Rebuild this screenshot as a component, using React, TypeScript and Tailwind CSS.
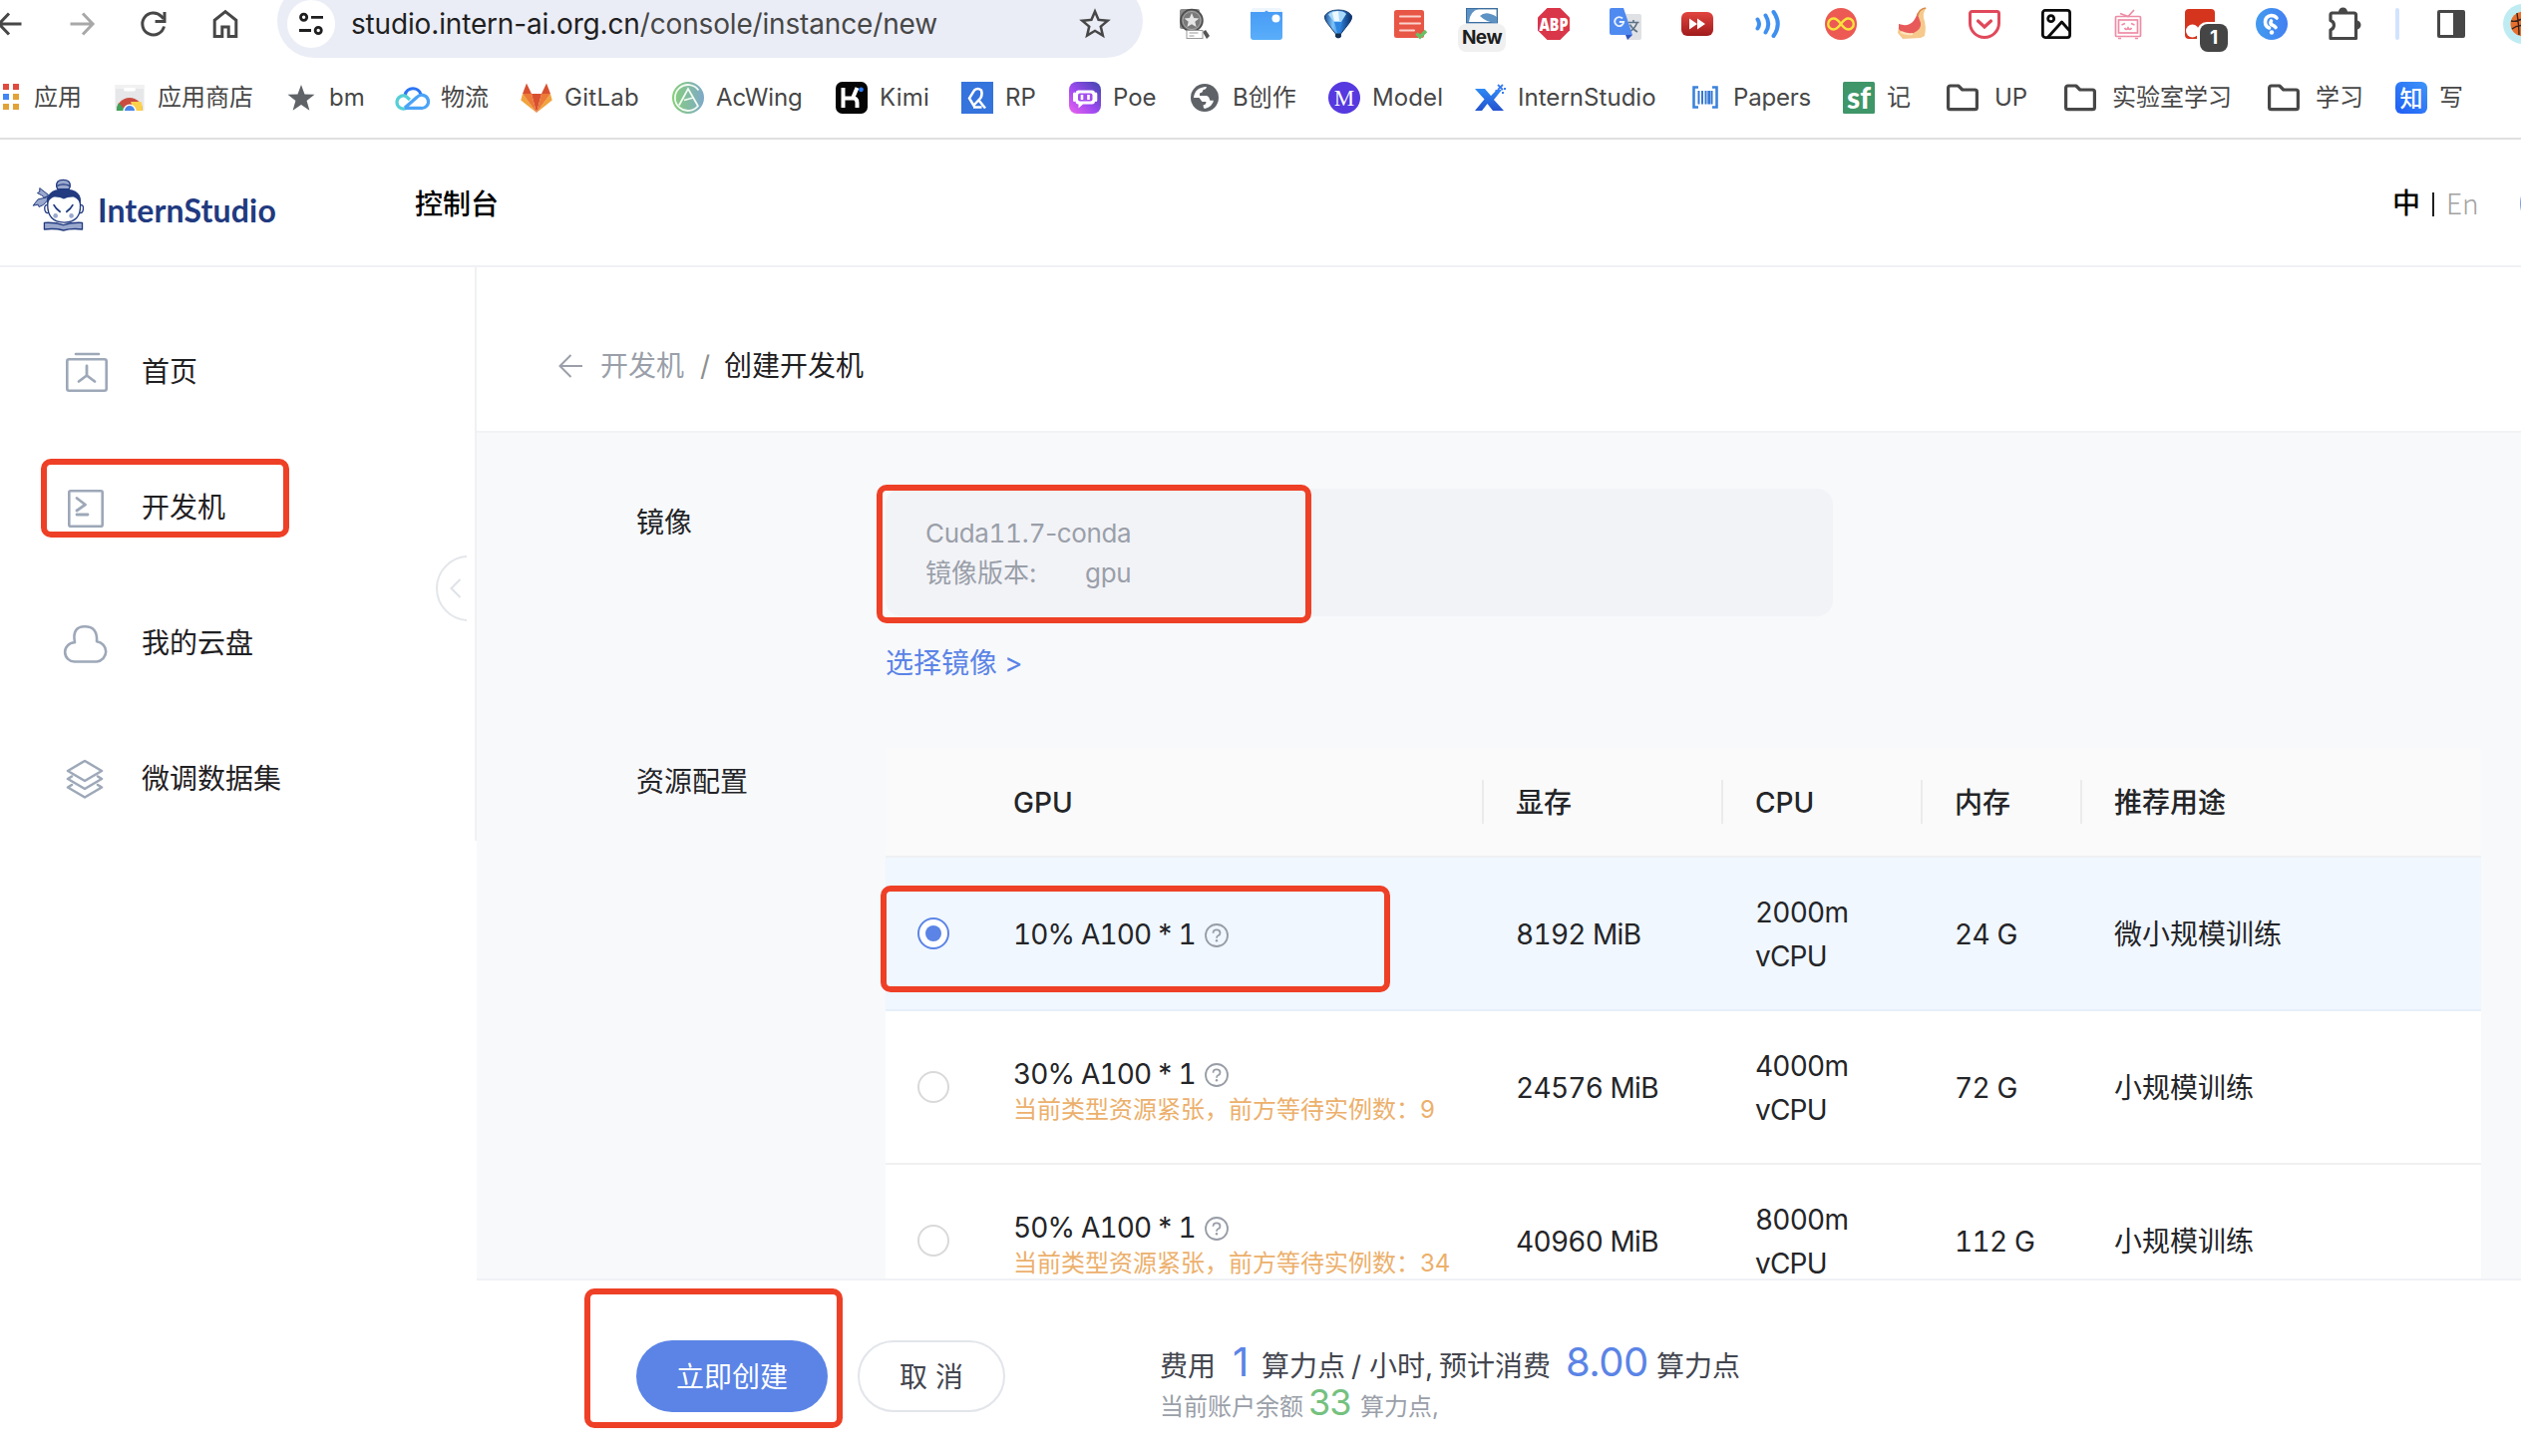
import React from 'react';

type IconProps = { children: React.ReactNode; className?: string; viewBox?: string };

function Svg({ children, className = 'size-8', viewBox = '0 0 32 32' }: IconProps) {
  return (
    <svg viewBox={viewBox} className={`shrink-0 overflow-visible ${className}`} fill="none">
      {children}
    </svg>
  );
}

/* ---------- browser toolbar ---------- */

function Cell({ children }: { children: React.ReactNode }) {
  return <div className="relative flex h-12 w-[72px] shrink-0 items-center justify-center">{children}</div>;
}

const arrow = (
  <path d="M4.500 16H27M17 5.500 27 16 17 26.500" strokeWidth="3" />
);

function NavButtons() {
  return (
    <div className="-ml-[26px] mr-4 flex">
      <Cell>
        <Svg className="size-8 rotate-180"><g stroke="#474747">{arrow}</g></Svg>
      </Cell>
      <Cell>
        <Svg><g stroke="#a8a8a8">{arrow}</g></Svg>
      </Cell>
      <Cell>
        <Svg>
          <path d="M26.500 18.500A11 11 0 1 1 23.800 8.400L26 10.800" stroke="#474747" strokeWidth="3" />
          <path d="M27 4v9.600h-9.400" stroke="#474747" strokeWidth="3" />
        </Svg>
      </Cell>
      <Cell>
        <Svg>
          <path d="M5.200 28.500V12.300L16 3.600l10.800 8.700v16.200h-7.600v-9.500h-6.400v9.500z" stroke="#474747" strokeWidth="3" />
        </Svg>
      </Cell>
    </div>
  );
}

function Omnibox() {
  return (
    <div className="relative -mt-4 flex h-[74px] w-[868px] shrink-0 rounded-[37px] bg-[#ebedf6] pt-4">
      <div className="ml-[10px] flex size-12 items-center justify-center rounded-full bg-white">
        <Svg className="size-6" viewBox="0 0 24 24">
          <g stroke="#1f1f1f" strokeWidth="2.800">
            <circle cx="4.600" cy="5.300" r="3.100" />
            <path d="M12 5.300h12M0 18.500h12" />
            <circle cx="19.200" cy="18.500" r="3.100" />
          </g>
        </Svg>
      </div>
      <div className="ml-4 h-12 whitespace-nowrap text-[28px] leading-[48px] tracking-[-0.16px] text-[#1f1f1f]">
        studio.intern-ai.org.cn<span className="text-[#474747]">/console/instance/new</span>
      </div>
      <div className="ml-auto mr-[29px] flex h-12 items-center">
        <Svg className="size-[38px]" viewBox="0 0 24 24">
          <path fill="#474747" d="M22 9.240l-7.190-.620L12 2 9.190 8.630 2 9.240l5.460 4.730L5.820 21 12 17.270 18.180 21l-1.630-7.030L22 9.240zM12 15.400l-3.760 2.270 1-4.280-3.320-2.880 4.380-.380L12 6.100l1.710 4.040 4.380.380-3.320 2.880 1 4.280L12 15.400z" />
        </Svg>
      </div>
    </div>
  );
}

function Extensions() {
  return (
    <div className="ml-4 flex">
      <Cell>
        <Svg>
          <rect x="1" y="1" width="20" height="20" rx="2" fill="#8a8a8a" />
          <circle cx="13" cy="12.500" r="11" fill="#7a7a7a" stroke="#4c4c4c" strokeWidth="1.500" />
          <circle cx="13" cy="12.500" r="9" stroke="#a8a8a8" />
          <path d="m13 5 2.100 5 5.300.400-4.100 3.400 1.300 5.200-4.600-2.800L8.400 19l1.300-5.200-4.100-3.400 5.300-.400z" fill="#e6e6e6" />
          <path d="m24 24 3-2 4 6-3 3z" fill="#555" />
          <rect x="8" y="22.500" width="16" height="8" fill="#fff" stroke="#999" />
          <path d="M10.500 25h9M10.500 28h5" stroke="#999" />
        </Svg>
      </Cell>
      <Cell>
        <Svg>
          <defs><linearGradient id="panel" x2="0" y2="1"><stop stopColor="#479bf5" /><stop offset="1" stopColor="#5aaefa" /></linearGradient></defs>
          <path d="M2 0h28l2 4H0z" fill="#eef5fb" />
          <path d="M0 4h14l2-1.500L18 4h14v25a3 3 0 0 1-3 3H3a3 3 0 0 1-3-3z" fill="url(#panel)" />
          <circle cx="25.500" cy="10.500" r="4" fill="#fff" />
        </Svg>
      </Cell>
      <Cell>
        <Svg>
          <defs><linearGradient id="gem"><stop stopColor="#1c4f95" /><stop offset=".3" stopColor="#7cc4fb" /><stop offset=".55" stopColor="#2f83dc" /><stop offset="1" stopColor="#0a2c66" /></linearGradient></defs>
          <path d="M2.500 8Q6 2 16 2t13.500 6q.500 3-2 6.500L18.500 26v3q-2.500 2-5 0v-3L4.500 14.500Q2 11 2.500 8z" fill="url(#gem)" stroke="#15396b" />
          <path d="M6 6.500Q10 3 16 3t8 3L19 14h-7z" fill="#a9d8fa" />
          <path d="M10 4.500 16 3l1 10h-5z" fill="#eef9ff" />
          <path d="m12 14 4 13 4-13z" fill="#2f86e0" />
          <path d="M14 25.500h4v4q-2 1-4 0z" fill="#17304f" />
        </Svg>
      </Cell>
      <Cell>
        <Svg>
          <rect y="2" width="30" height="28" rx="2.500" fill="#e85646" />
          <path d="M6 8.500h20M6 15.500h20M6 22.500h14" stroke="#fbd3cd" strokeWidth="2.200" strokeLinecap="round" />
          <path d="m22.500 25.500 3.500 3.500 6-6" stroke="#6abf63" strokeWidth="3.500" />
        </Svg>
      </Cell>
      <Cell>
        <Svg>
          <rect x=".7" y=".7" width="30.600" height="14" fill="#fff" stroke="#3f6f9f" strokeWidth="1.400" />
          <path d="M1 1h12Q4 3 3 14H1zM14 8q6-6 17 1v6q-10 0-17-7z" fill="#5d93c4" />
        </Svg>
        <span className="absolute left-3 top-6 h-7 w-12 rounded-lg bg-[#f0f0f1] text-center text-[19px] font-bold leading-7 tracking-[-0.5px] text-[#1f1f1f]">New</span>
      </Cell>
      <Cell>
        <Svg>
          <path d="M9.500 0h13L32 9.500v13L22.500 32h-13L0 22.500v-13z" fill="#da3649" />
          <text x="1.500" y="22.500" fontSize="18" fontWeight="800" fill="#fff" fontFamily="Open Sans, sans-serif" textLength="29" lengthAdjust="spacingAndGlyphs">ABP</text>
        </Svg>
      </Cell>
      <Cell>
        <Svg>
          <path d="M14 6h16a2 2 0 0 1 2 2v22a2 2 0 0 1-2 2H18z" fill="#dfe1e4" />
          <path d="M18.500 14.500h11M24 12v2.500M27.500 15q-2 6-8.500 9.500M20.500 16.500q2.500 5 7.500 7.500" stroke="#5d7286" strokeWidth="1.600" />
          <path d="m16 27 7 0-5 5z" fill="#3155bd" />
          <path d="M2 0h12l9 27H2a2 2 0 0 1-2-2V2a2 2 0 0 1 2-2z" fill="#4f8af0" />
          <path d="M13 10.500A4.500 4.500 0 1 0 14.200 14H9.800" stroke="#e8effd" strokeWidth="1.900" />
        </Svg>
      </Cell>
      <Cell>
        <Svg>
          <defs><linearGradient id="ff" x2="0" y2="1"><stop stopColor="#e24540" /><stop offset="1" stopColor="#9f1b1b" /></linearGradient></defs>
          <rect y="4" width="32" height="24" rx="6" fill="url(#ff)" />
          <path d="M8 10.500 16 16l-8 5.500zM16 10.500 24 16l-8 5.500z" fill="#fff" />
        </Svg>
      </Cell>
      <Cell>
        <Svg>
          <g stroke="#3f8fef" strokeWidth="4" strokeLinecap="round">
            <path d="M4.500 11.500q3 4.500 0 9M12.500 7.500q5.500 8.500 0 17M20.500 4q8.500 12 0 24" />
          </g>
        </Svg>
      </Cell>
      <Cell>
        <Svg>
          <circle cx="16" cy="16" r="16" fill="#ec5a53" />
          <path d="M16 16c-3-4-5-5.500-7.300-5.500a5.500 5.500 0 0 0 0 11C11 21.500 13 20 16 16s5-5.500 7.300-5.500a5.500 5.500 0 0 1 0 11C21 21.500 19 20 16 16z" stroke="#f8e43c" strokeWidth="2.400" />
        </Svg>
      </Cell>
      <Cell>
        <Svg>
          <path d="M2 19q11 2 16-4 4-5 4-10 2-5 8-5-4 4-3 10 3 8 1 18l-4 2-18 1-5-6z" fill="#f6c98c" />
          <path d="M2 16q9 3 14-2 4-5 4.500-9 2 6 3.500 10 1 6-7 10-10 3-15-4z" fill="#e85a5a" />
          <path d="M21 8q1-7 8-8" stroke="#d98a4a" strokeWidth="1.500" />
          <path d="M4 24q6 3 12 2" stroke="#fde6bb" strokeWidth="2" />
        </Svg>
      </Cell>
      <Cell>
        <Svg>
          <path d="M1.500 5.500a2 2 0 0 1 2-2h25a2 2 0 0 1 2 2V15a14.500 14.500 0 0 1-29 0z" stroke="#e0495b" strokeWidth="3" />
          <path d="m9.500 13 6.500 6 6.500-6" stroke="#e0495b" strokeWidth="3.200" strokeLinecap="round" />
        </Svg>
      </Cell>
      <Cell>
        <Svg>
          <g stroke="#0b0b0b" strokeWidth="2.800" strokeLinejoin="round">
            <rect x="2.400" y="2.400" width="27.200" height="27.200" rx="2.500" />
            <circle cx="10.700" cy="10.700" r="3" />
            <path d="M7.500 29.500 21.500 14l8 9" />
          </g>
        </Svg>
      </Cell>
      <Cell>
        <Svg>
          <g stroke="#ee8ca6" strokeWidth="1.700">
            <rect x="3.500" y="8.500" width="25" height="20" rx="1" />
            <rect x="6.500" y="12" width="19" height="13" />
            <path d="M8 5.500 16 8.500 22 2M6 30.500h3M23 30.500h3M9.500 17l3.500-1.500M22.500 17 19 15.500M12.500 20q1.800 3 3.500 0 1.700 3 3.500 0" />
          </g>
        </Svg>
      </Cell>
      <Cell>
        <Svg>
          <path d="M1 5a4 4 0 0 1 4-4h22a4 4 0 0 1 4 4v22a4 4 0 0 1-4 4H5a4 4 0 0 1-4-4z" fill="#d5341d" />
          <circle cx="8.500" cy="23" r="6.500" fill="#fff" />
        </Svg>
        <span className="absolute left-[33px] top-[22px] h-8 w-[33px] rounded-[10px] bg-white" />
        <span className="absolute left-9 top-6 h-7 w-7 rounded-lg bg-[#454545] text-center text-[19px] font-bold leading-7 text-white">1</span>
      </Cell>
      <Cell>
        <Svg>
          <defs><linearGradient id="ear"><stop stopColor="#429bef" /><stop offset="1" stopColor="#4380f2" /></linearGradient></defs>
          <circle cx="16" cy="16" r="16" fill="url(#ear)" />
          <path d="M21 10Q19 7.500 15.500 7.500 9.500 8.500 9.500 14q0 4.500 4 6M15.500 13q-1.500 3 1 4t3.500 2.500" stroke="#fff" strokeWidth="3.600" strokeLinecap="round" />
          <circle cx="16" cy="24.500" r="2.200" fill="#fff" />
        </Svg>
      </Cell>
      <Cell>
        <Svg className="size-9" viewBox="0 0 36 36">
          <path d="M6.500 7h22a2 2 0 0 1 2 2v23.500h-25.500V24a5 5 0 0 0 0-9.500V9a2 2 0 0 1 1.500-2z" stroke="#474747" strokeWidth="3.200" strokeLinejoin="round" />
          <path d="M13 6a4.500 4.500 0 0 1 9 0zM31 14.500a4.500 4.500 0 0 1 0 9z" fill="#474747" />
        </Svg>
      </Cell>
      <div className="flex h-12 w-9 items-center justify-center">
        <div className="h-8 w-1 rounded-full bg-[#d3e3fd]" />
      </div>
      <Cell>
        <Svg>
          <path d="M4 2h24a2 2 0 0 1 2 2v24a2 2 0 0 1-2 2H4a2 2 0 0 1-2-2V4a2 2 0 0 1 2-2zm1 3v22h13V5z" fill="#474747" fillRule="evenodd" />
        </Svg>
      </Cell>
      <div className="ml-4 flex h-12 shrink-0 items-center">
        <Svg className="size-10" viewBox="0 0 40 40">
          <circle cx="20" cy="20" r="20" fill="#bfecf2" />
          <circle cx="20" cy="20" r="12.500" fill="#e8702f" />
          <path d="M8 17q8 2 17-7M9 25q6-5 18-3M14 9q2 14 2 22" stroke="#3a2318" strokeWidth="1.400" />
        </Svg>
      </div>
    </div>
  );
}

/* ---------- bookmarks ---------- */

const Folder = () => (
  <Svg>
    <path d="M1.600 6a2 2 0 0 1 2-2h8.200l4 4h12.600a2 2 0 0 1 2 2v15.700a2 2 0 0 1-2 2H3.600a2 2 0 0 1-2-2z" stroke="#474747" strokeWidth="3.200" strokeLinejoin="round" />
  </Svg>
);

const bookmarks: { label: string; width: string; text?: string; icon: React.ReactNode }[] = [
  {
    label: '应用', width: 'w-[114px]', text: 'ml-[3px]',
    icon: (
      <Svg className="h-8 w-[19px]" viewBox="0 0 19 32">
        <path d="M3 2h6v6H3zM13 2h6v6h-6z" fill="#e04a3f" />
        <path d="M3 12h6v6H3z" fill="#4285f4" />
        <path d="M13 12h6v6h-6zM3 22h6v6H3zM13 22h6v6h-6z" fill="#e2a336" />
      </Svg>
    ),
  },
  {
    label: '应用商店', width: 'w-[172px]',
    icon: (
      <Svg>
        <path d="M1.500 3h29v26h-29z" fill="#e6e7e8" />
        <path d="M1.500 3h29v4h-29z" fill="#f1f1f2" />
        <rect x="10" y="6" width="12" height="3.500" rx="1.700" fill="#fff" />
        <path d="M3 29a13 13 0 0 1 26 0z" fill="#ca4b40" />
        <path d="M3 29q0-5 2-8l7 8z" fill="#3fa25a" />
        <path d="M17 20h10.500q1.500 4 1.500 9h-9z" fill="#fbd04b" />
        <path d="M9.500 29a6.500 6.500 0 0 1 13 0z" fill="#fff" />
        <path d="M11 29a5 5 0 0 1 10 0z" fill="#4b85ea" />
      </Svg>
    ),
  },
  {
    label: 'bm', width: 'w-[112px]',
    icon: <Svg><path d="m16 3 3.500 9.400 10 .4-7.900 6.200 2.800 9.700L16 23.100l-8.400 5.600 2.800-9.700-7.900-6.200 10-.4z" fill="#5f6368" /></Svg>,
  },
  {
    label: '物流', width: 'w-[124px]',
    icon: (
      <Svg>
        <g strokeWidth="3.200">
          <path d="M8.200 13A8.200 8.200 0 0 1 24 12.500" stroke="#2b74f5" />
          <path d="m13 18-4-3.500A6.500 6.500 0 1 0 9 26.500" stroke="#56cfd6" />
          <path d="M8 26 20 15.500a6.600 6.600 0 1 1 4 10.900H8" stroke="#4ba3f7" />
        </g>
      </Svg>
    ),
  },
  {
    label: 'GitLab', width: 'w-[152px]', text: 'tracking-[0.28px]',
    icon: (
      <Svg>
        <path d="M6 1.500 2 12h9zM26 1.500 21 12h9z" fill="#d9502f" />
        <path d="M16 31 2 12 .3 18.500z" fill="#f0a33c" />
        <path d="M16 31 30 12l1.700 6.500z" fill="#f0a33c" />
        <path d="M16 31 2 12h9zM16 31 30 12h-9z" fill="#ec7a36" />
        <path d="m16 31-5-19h10z" fill="#d9502f" />
      </Svg>
    ),
  },
  {
    label: 'AcWing', width: 'w-[164px]', text: 'tracking-[-0.14px]',
    icon: (
      <Svg>
        <defs><linearGradient id="ac"><stop stopColor="#86cf78" /><stop offset="1" stopColor="#7fa9c9" /></linearGradient></defs>
        <circle cx="16" cy="16" r="16" fill="url(#ac)" />
        <path d="M26.500 8.500A13 13 0 1 0 26.500 23.500M7 23.500 16 7l9.500 16.500M12 18.500l9-2.500" stroke="#f3fbf3" strokeWidth="1.800" />
      </Svg>
    ),
  },
  {
    label: 'Kimi', width: 'w-[126px]', text: 'tracking-[0.22px]',
    icon: (
      <Svg>
        <rect width="32" height="32" rx="6.500" fill="#050505" />
        <path d="M7.500 6v20M8 16.500h9L21.500 6M16 16q5.500 0 5.500 5v5" stroke="#fff" strokeWidth="4" />
        <circle cx="25.500" cy="7.800" r="2.400" fill="#2b7cf6" />
      </Svg>
    ),
  },
  {
    label: 'RP', width: 'w-[108px]',
    icon: (
      <Svg>
        <path d="M0 0h32v32H0z" fill="#3573dd" />
        <path d="M13.500 25.500 8 16.500 13 8.500q3.500-3 7 0 1.500 4-.5 7.500L13 23M12 25.500h8.500M17.500 18.500l6.500 8" stroke="#fff" strokeWidth="2.500" />
      </Svg>
    ),
  },
  {
    label: 'Poe', width: 'w-[120px]',
    icon: (
      <Svg>
        <defs><linearGradient id="poe" x1="0" y1="1" x2="1" y2="0"><stop stopColor="#ee62ee" /><stop offset=".45" stopColor="#9d4af0" /><stop offset="1" stopColor="#3d46ad" /></linearGradient></defs>
        <rect width="32" height="32" rx="8" fill="url(#poe)" />
        <path d="M9 8.500h14a3 3 0 0 1 3 3v8a3 3 0 0 1-3 3H14l-4.500 4v-4a3 3 0 0 1-3-3v-8a3 3 0 0 1 2.500-3z" fill="#fff" />
        <path d="M5.500 12v6.500M26.800 12v6.500" stroke="#fff" strokeWidth="3" strokeLinecap="round" />
        <rect x="9" y="11.500" width="14.500" height="8" rx="2" fill="#a34df0" />
        <path d="M13 13v5M19.500 13v5" stroke="#fff" strokeWidth="2.600" />
      </Svg>
    ),
  },
  {
    label: 'B创作', width: 'w-[140px]',
    icon: (
      <Svg>
        <circle cx="16" cy="16" r="14" fill="#5f6368" />
        <path d="M5 16Q6 5.500 18 5q-.500 3-3.500 3-.500 3-3.500 3.500V14h7q3 1 3 4.500h4q-1 6.500-9 8.500-1.500-1-1.500-3.500 3-.500 3-3.500h-4l-3-4z" fill="#fff" />
        <path d="M18 3q9 1 11 12l-2 3.500h-5q0-5-4-5.500 0-3.500 3-4-.500-4-3-6z" fill="#5f6368" />
      </Svg>
    ),
  },
  {
    label: 'Model', width: 'w-[146px]', text: 'tracking-[0.1px]',
    icon: (
      <Svg>
        <circle cx="16" cy="16" r="16" fill="#5639df" />
        <text x="16" y="24" fontSize="23" textAnchor="middle" fill="#fff" fontFamily="Liberation Serif, serif">M</text>
      </Svg>
    ),
  },
  {
    label: 'InternStudio', width: 'w-[216px]', text: 'tracking-[0.04px]',
    icon: (
      <Svg>
        <defs><linearGradient id="x" x2="0" y2="1"><stop stopColor="#2f8af5" /><stop offset="1" stopColor="#2452cf" /></linearGradient></defs>
        <path d="M1 7h10l6 7 6-6h5l-8 10 10 11H19l-5.500-7L8 29H1l9.500-11.500z" fill="url(#x)" />
        <path d="m24 3 2.500 2.500L29 3M26.500 5.500 24 8M26.500 5.500 29 8M30 7h2M21.500 9h2M28 11h2" stroke="#3c7df0" strokeWidth="1.800" />
      </Svg>
    ),
  },
  {
    label: 'Papers', width: 'w-[154px]', text: 'tracking-[-0.2px]',
    icon: (
      <Svg>
        <path d="M9 5.500H4.500v20H9M23 5.500h4.500v20H23" stroke="#3b82dc" strokeWidth="2.600" />
        <path d="M9.500 9v13.500M13 9v13.500M16.500 9v13.500M22.500 9v13.500" stroke="#3478d4" strokeWidth="2" />
        <path d="M19.700 9v13.500" stroke="#3478d4" strokeWidth="2.800" />
      </Svg>
    ),
  },
  {
    label: '记', width: 'w-[104px]',
    icon: (
      <Svg>
        <rect width="32" height="32" rx="1.500" fill="#3f9668" />
        <text x="4" y="27" fontSize="30" fontWeight="900" fill="#fff" fontFamily="Lato, sans-serif" textLength="24" lengthAdjust="spacingAndGlyphs">sf</text>
      </Svg>
    ),
  },
  { label: 'UP', width: 'w-[118px]', text: 'ml-1', icon: <Folder /> },
  { label: '实验室学习', width: 'w-[204px]', text: 'ml-1', icon: <Folder /> },
  { label: '学习', width: 'w-[128px]', text: 'ml-1', icon: <Folder /> },
  {
    label: '写', width: 'w-[80px]',
    icon: (
      <Svg>
        <defs><linearGradient id="zhi" x1="1" x2="0" y2="1"><stop stopColor="#3d96f8" /><stop offset="1" stopColor="#1f5cf5" /></linearGradient></defs>
        <rect width="32" height="32" rx="6" fill="url(#zhi)" />
        <text x="16" y="24.500" fontSize="23" textAnchor="middle" fill="#fff" fontWeight="500" fontFamily="Noto Sans CJK SC, sans-serif">知</text>
      </Svg>
    ),
  },
];

function BookmarkBar() {
  return (
    <div className="mt-1 flex h-[72px] items-center whitespace-nowrap text-2xl text-[#474747]">
      {bookmarks.map((b) => (
        <div key={b.label} className={`flex shrink-0 items-center gap-3 ${b.width}`}>
          {b.icon}
          <span className={b.text ?? ''}>{b.label}</span>
        </div>
      ))}
    </div>
  );
}

/* ---------- application ---------- */

function Header() {
  return (
    <header className="flex h-32 shrink-0 items-center border-b-2 border-[#f0f1f5] pl-8">
      <svg viewBox="96 28 156 160" className="mt-[5px] h-[53px] w-[52px] shrink-0" fill="none" strokeLinejoin="round">
        <path d="M170 52q-2-20 20-20 23 0 21 20l-3 8h-35z" fill="#9aa8cd" stroke="#213a80" strokeWidth="4" />
        <path d="M172 50q18-9 38 0" stroke="#213a80" strokeWidth="4" />
        <path d="m146 78-27-21v11l-7 4q14 6 22 14zM144 84l-30 7-15 19 15-3 3 7q15-4 24-18z" fill="#9aa8cd" stroke="#213a80" strokeWidth="3" />
        <path d="M145 108q-11-2-11 9 0 18 13 15M240 108q11-2 11 9 0 18-13 15" fill="#fff" stroke="#213a80" strokeWidth="4" />
        <path d="M143 108q0-42 49-42t50 42q2 52-49 53-50-1-50-53z" fill="#fff" stroke="#213a80" strokeWidth="4" />
        <path d="M142 108q-8-47 50-49 60 2 50 49-4-18-20-24-18-1-30 6-12-7-30-6-16 6-20 24z" fill="#213a80" />
        <path d="M161 107q6 12 21 23M220 107q-6 12-21 23" stroke="#213a80" strokeWidth="5" />
        <circle cx="167" cy="141" r="7" fill="#9aa8cd" /><circle cx="215" cy="141" r="7" fill="#9aa8cd" />
        <path d="M133 162q32-2 58 7 26-9 57-7v20q-32-4-57 3-26-7-58-3z" fill="#9aa8cd" stroke="#213a80" strokeWidth="4" />
      </svg>
      <span className="ml-[14px] mt-[15px] w-[318px] font-[Lato] text-[32px] font-bold leading-none tracking-[0.15px] text-[#213a80]">InternStudio</span>
      <span className="mt-[3px] text-[28px] font-medium text-black">控制台</span>
      <div className="ml-auto mt-[2px] flex items-center text-[28px] text-[#1f1f1f]">
        <span className="w-[40px] font-medium text-black">中</span>
        <span className="mr-[12px] mt-0.5 h-6 w-[2px] bg-[#1f1f1f]" />
        <span className="-mt-0.5 w-[74px] font-['Noto_Sans_CJK_SC'] font-light leading-[42px] text-[#a3a3a3]">En</span>
        <span className="h-14 w-[1px] overflow-hidden"><span className="block size-14 rounded-full bg-[#7c9dec]" /></span>
      </div>
    </header>
  );
}

const stroke = { stroke: '#9da8b8', strokeWidth: 2.6, strokeLinejoin: 'round', strokeLinecap: 'round' } as const;

const menu = [
  {
    label: '首页',
    icon: <g {...stroke}><path d="M13 3h23" /><rect x="4.300" y="8.300" width="39.400" height="31.400" rx="2" /><path d="M24 15v9.500M24 24.500l-8 6M24 24.500l8 6" strokeWidth="2.800" /></g>,
  },
  {
    label: '开发机',
    icon: <g {...stroke}><rect x="6.300" y="4.300" width="33.400" height="35.400" rx="1.500" /><path d="m14 11.500 8.500 6.500-8.500 6M14 28h11" strokeWidth="2.800" /></g>,
  },
  {
    label: '我的云盘',
    icon: <path {...stroke} d="M12 39.500a9.600 9.600 0 0 1-.5-19.200H12Q9 4.300 22 4.300t12 14.900a10.200 10.200 0 0 1 0 20.300z" />,
  },
  {
    label: '微调数据集',
    icon: <g {...stroke}><path d="m22 3 17 10-17 10L5 13zM9 18.500 5 21l17 10 17-10-4-2.500M9 27l-4 2.500 17 10 17-10-4-2.500" /></g>,
  },
];

function Sidebar() {
  return (
    <aside className="w-[478px] shrink-0 bg-white">
      <nav className="relative h-[575px] border-r-2 border-[#f0f1f4] pt-[37px]">
        {menu.map((m) => (
          <div key={m.label} className="flex h-[136px] items-center pl-[63px] text-[28px] text-[#1f2022]">
            <svg viewBox="0 0 48 44" className="mt-0.5 h-11 w-12" fill="none">{m.icon}</svg>
            <span className="ml-[31px]">{m.label}</span>
          </div>
        ))}
        <div className="absolute left-[437px] top-[289px] h-[66px] w-[31px] overflow-hidden">
          <div className="flex size-[66px] items-center rounded-full border-2 border-[#e3e6ea]">
            <svg viewBox="0 0 12 20" className="ml-3 h-5 w-3" fill="none"><path d="m10.500 1-9 9 9 9" stroke="#dfe2e7" strokeWidth="2" /></svg>
          </div>
        </div>
      </nav>
    </aside>
  );
}

/* Sets the digits of a label at equal widths and leaves its other characters proportional. */
function Num({ children }: { children: string }) {
  return (
    <>
      {children.split(/(\d+)/).map((part, i) =>
        i % 2 ? <span key={i} className="tabular-nums">{part}</span> : part
      )}
    </>
  );
}

const columns = 'grid grid-cols-[96px_504px_240px_200px_160px_400px]';

const rows = [
  { gpu: '10% A100 * 1', mem: '8192 MiB', cpu: '2000m', ram: '24 G', use: '微小规模训练', selected: true },
  { gpu: '30% A100 * 1', wait: 9, mem: '24576 MiB', cpu: '4000m', ram: '72 G', use: '小规模训练' },
  { gpu: '50% A100 * 1', wait: 34, mem: '40960 MiB', cpu: '8000m', ram: '112 G', use: '小规模训练' },
];

function Radio({ on }: { on?: boolean }) {
  return on ? (
    <div className="flex size-8 items-center justify-center rounded-full border-2 border-[#5b84e6] bg-white">
      <div className="size-4 rounded-full bg-[#5b84e6]" />
    </div>
  ) : (
    <div className="size-8 rounded-full border-2 border-[#d9d9d9] bg-white" />
  );
}

function GpuTable() {
  return (
    <div className="w-[1600px] text-[28px] text-[#242528]">
      <div className={`${columns} h-[110px] items-center border-b-2 border-[#eff0f1] bg-[#fafafa] font-medium`}>
        <div />
        {['GPU', '显存', 'CPU', '内存', '推荐用途'].map((h, i) => (
          <div key={h} className={`h-11 border-[#ebebeb] pl-8 leading-[46px] ${i < 4 ? 'border-r-2' : ''}`}>{h}</div>
        ))}
      </div>
      {rows.map((r) => (
        <div
          key={r.gpu}
          className={`${columns} h-[154px] items-center border-b-2 leading-[44px] ${r.selected ? 'border-[#e6f0fa] bg-[#f0f7ff]' : 'border-[#f0f0f0] bg-white'}`}
        >
          <div className="flex justify-center"><Radio on={r.selected} /></div>
          <div className="whitespace-nowrap pl-8 pt-0.5">
            <div className="flex items-center">
              <span className="w-48 tracking-[-0.9px]"><Num>{r.gpu}</Num></span>
              <svg viewBox="0 0 24 24" className="mt-0.5 size-6" fill="none">
                <circle cx="12" cy="12" r="11" stroke="#979ca6" strokeWidth="1.800" />
                <path d="M8.500 9.800q0-3.500 3.500-3.500t3.500 3.100q0 2-2 2.900-1.500.7-1.500 2.400" stroke="#979ca6" strokeWidth="1.800" />
                <circle cx="12" cy="17.300" r="1.200" fill="#979ca6" />
              </svg>
            </div>
            {r.wait && <div className="text-2xl leading-7 text-[#ecb06c]">当前类型资源紧张，前方等待实例数：{r.wait}</div>}
          </div>
          <div className="pl-8 pt-0.5 tracking-[-0.7px]"><Num>{r.mem}</Num></div>
          <div className="pl-8 pt-px tracking-[-0.8px]"><div><Num>{r.cpu}</Num></div><div>vCPU</div></div>
          <div className="pl-8 pt-0.5 tracking-[-0.6px]"><Num>{r.ram}</Num></div>
          <div className="pl-8 pt-0.5">{r.use}</div>
        </div>
      ))}
    </div>
  );
}

function Content() {
  return (
    <main className="flex min-w-0 flex-1 flex-col">
      <div className="flex h-[166px] shrink-0 items-center border-b-2 border-[#f2f3f5] bg-white pl-[82px] pt-[33px] text-[28px]">
        <svg viewBox="0 0 24 24" className="size-6" fill="none"><path d="M24 12H1.500M12.500 1l-11 11 11 11" stroke="#9a9fa9" strokeWidth="2" /></svg>
        <span className="ml-[18px] text-[#9a9fa9]">开发机</span>
        <span className="ml-4 text-[#8f8f8f]">/</span>
        <span className="ml-[14px] text-[#1f2022]">创建开发机</span>
      </div>
      <div className="h-[848px] overflow-hidden bg-[#f8f9fb] pl-40 text-[28px] text-[#242528]">
        <div className="flex pt-14">
          <div className="w-[250px] shrink-0 pt-[13px]">镜像</div>
          <div>
            <div className="flex h-[128px] w-[950px] flex-col justify-center rounded-2xl bg-[#f2f3f7] pl-10 pt-[2px] text-[26px] leading-10 text-[#9a9fa9]">
              <span className="tracking-[-0.35px]"><Num>Cuda11.7-conda</Num></span>
              <div className="flex"><span className="w-40">镜像版本:</span><span className="tracking-[-0.3px]">gpu</span></div>
            </div>
            <div className="mt-[25px] leading-[44px] text-[#5b84e6]">选择镜像<span className="tracking-[-0.8px]"> &gt;</span></div>
          </div>
        </div>
        <div className="mt-[63px] flex">
          <div className="w-[250px] shrink-0 pt-[13px] leading-[42px]">资源配置</div>
          <GpuTable />
        </div>
      </div>
    </main>
  );
}

function Footer() {
  return (
    <footer className="flex flex-1 pl-[478px]">
      <div className="flex flex-1 border-t-2 border-[#f0f1f6] pl-40 pt-[60px] text-[28px]">
        <button className="flex h-[72px] w-48 items-center justify-center rounded-full bg-[#5b84e6] pt-0.5 text-white">立即创建</button>
        <button className="ml-[30px] flex h-[72px] w-[148px] items-center justify-center rounded-full border-2 border-[#e2e5ea] pt-0.5 text-[#43464f]">取 消</button>
        <div className="-mt-[3px] ml-[155px] text-[#43464f]">
          <div className="flex h-[54px] items-baseline whitespace-nowrap">
            <span className="w-[73px]">费用</span>
            <span className="w-[29px] text-[40px] leading-[50px] text-[#5b84e6]">1</span>
            <span className="w-[90px]">算力点</span>
            <span className="w-[18px]">/</span>
            <span className="w-[70px]">小时,</span>
            <span className="w-[127px]">预计消费</span>
            <span className="w-[91px] text-[40px] leading-[50px] tracking-[-0.5px] text-[#5b84e6]">8.00</span>
            <span>算力点</span>
          </div>
          <div className="-mt-[9px] flex items-baseline whitespace-nowrap text-2xl text-[#9a9fa9]">
            <span className="w-[149px]">当前账户余额</span>
            <span className="w-[52px] text-[36px] leading-[40px] tracking-[-1px] text-[#75c17f]">33</span>
            <span>算力点,</span>
          </div>
        </div>
      </div>
    </footer>
  );
}

/* Red frames that mark the steps of the walkthrough. */
const marks = [
  'left-[41px] top-[460px] h-[79px] w-[249px]',
  'left-[879px] top-[486px] h-[139px] w-[436px]',
  'left-[883px] top-[888px] h-[107px] w-[511px]',
  'left-[586px] top-[1292px] h-[140px] w-[259px]',
];

export default function App() {
  return (
    <div className="relative flex h-[1460px] w-[2528px] flex-col overflow-hidden bg-white font-[Inter,'Noto_Sans_CJK_SC',sans-serif]">
      <div className="h-[140px] shrink-0 border-b-2 border-[#e0e0e0]">
        <div className="flex h-[58px]">
          <NavButtons />
          <Omnibox />
          <Extensions />
        </div>
        <BookmarkBar />
      </div>
      <Header />
      <div className="flex h-[1014px] shrink-0">
        <Sidebar />
        <Content />
      </div>
      <Footer />
      {marks.map((m) => (
        <div key={m} className={`pointer-events-none absolute rounded-[10px] border-[6px] border-[#ee4026] ${m}`} />
      ))}
    </div>
  );
}
